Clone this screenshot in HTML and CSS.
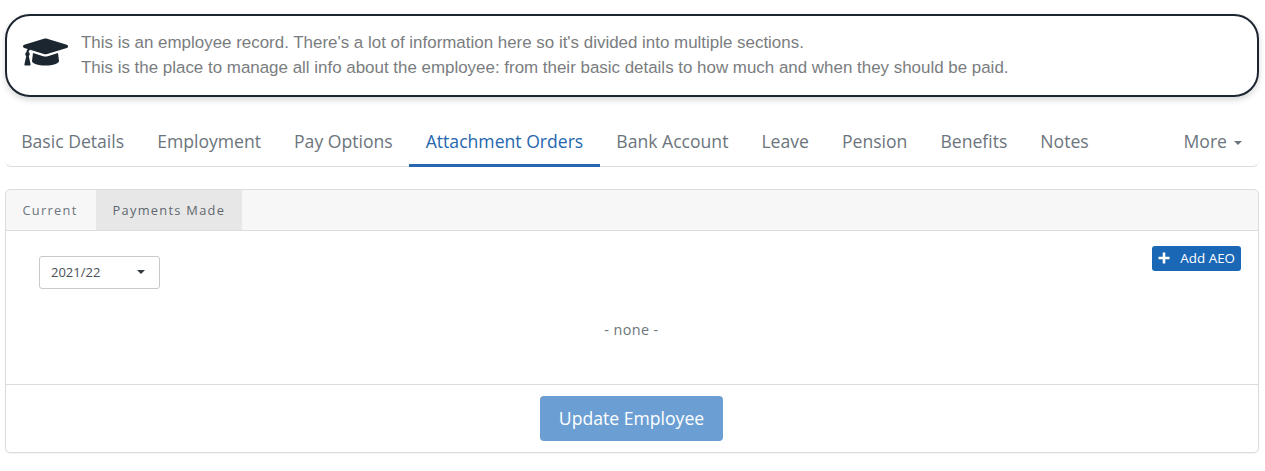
FILE: index.html
```html
<!DOCTYPE html>
<html lang="en">
<head>
<meta charset="utf-8">
<title>Employee record</title>
<link rel="stylesheet" href="styles.css">
</head>
<body>
<div class="banner">
  <svg class="cap" viewBox="0 0 640 512" aria-hidden="true"><path d="M622.34 153.2L343.4 67.5c-15.2-4.67-31.6-4.67-46.79 0L17.66 153.2c-23.54 7.23-23.54 38.36 0 45.59l48.63 14.94c-10.67 13.19-17.23 29.28-17.88 46.9C38.78 266.15 32 276.11 32 288c0 10.78 5.68 19.85 13.86 25.65L20.33 428.53C18.11 438.52 25.71 448 35.94 448h56.11c10.24 0 17.84-9.48 15.62-19.47L82.14 313.65C90.32 307.85 96 298.78 96 288c0-11.57-6.47-21.25-15.66-26.87.76-15.02 8.44-28.3 20.69-36.72L296.6 284.5c9.06 2.78 26.44 6.25 46.79 0l278.95-85.7c23.55-7.24 23.55-38.36 0-45.6zM352.79 315.09c-28.53 8.76-52.84 3.92-65.59 0l-145.02-44.55L128 384c0 35.35 85.96 64 192 64s192-28.65 192-64l-14.18-113.47-145.03 44.56z"/></svg>
  <div class="banner-text">
    <p>This is an employee record. There's a lot of information here so it's divided into multiple sections.</p>
    <p>This is the place to manage all info about the employee: from their basic details to how much and when they should be paid.</p>
  </div>
</div>

<nav class="tabs">
  <a class="tab">Basic Details</a>
  <a class="tab">Employment</a>
  <a class="tab">Pay Options</a>
  <a class="tab active">Attachment Orders</a>
  <a class="tab">Bank Account</a>
  <a class="tab">Leave</a>
  <a class="tab">Pension</a>
  <a class="tab">Benefits</a>
  <a class="tab">Notes</a>
  <a class="tab more">More<span class="caret"></span></a>
</nav>

<section class="card">
  <div class="card-tabs">
    <a class="subtab">Current</a>
    <a class="subtab selected">Payments Made</a>
  </div>
  <div class="card-body">
    <div class="toolbar">
      <button class="select" type="button"><span>2021/22</span><span class="select-caret"></span></button>
      <button class="add" type="button">
        <svg class="plus" viewBox="0 0 12 12" aria-hidden="true"><path d="M6 .5v11M.5 6h11"/></svg>
        Add AEO
      </button>
    </div>
    <p class="none">- none -</p>
  </div>
  <div class="card-footer">
    <button class="update" type="button">Update Employee</button>
  </div>
</section>
</body>
</html>
```
FILE: styles.css
```css
* { box-sizing: border-box; }
html, body { margin: 0; padding: 0; background: #fff; }
body {
  padding: 14px 6px 0 5px;
  font-family: "Open Sans", "Liberation Sans", sans-serif;
  color: #6c757d;
  height: 471px;
  overflow: hidden;
}
p { margin: 0; }

.banner {
  display: flex;
  align-items: center;
  height: 83px;
  padding: 0 16px 0 16px;
  border: 2px solid #1c2630;
  border-radius: 25px;
  box-shadow: 0 3px 6px rgba(0, 0, 0, .16);
  background: #fff;
}
.cap { width: 45px; height: 36px; margin-bottom: 8px; fill: #1c2630; flex: none; }
.banner-text {
  margin-left: 13px;
  padding-bottom: 2px;
  font-family: "Liberation Sans", Arial, sans-serif;
  font-size: 16.93px;
  line-height: 25px;
  color: #7a7d80;
}

.tabs {
  display: flex;
  height: 41px;
  margin-top: 29px;
  border-bottom: 1px solid #dcdcdc;
  border-radius: 0 0 6px 6px;
}
.tab {
  height: 41px;
  padding: 0 16.5px;
  font-size: 17.6px;
  line-height: 31px;
  color: #6c757d;
  white-space: nowrap;
}
.tab:first-child { padding-left: 16.2px; }
.tab.active {
  color: #2566ae;
  border-bottom: 3px solid #2566ae;
}
.tab.more { margin-left: auto; padding-right: 17px; }
.caret {
  display: inline-block;
  margin-left: 7px;
  vertical-align: 3px;
  border-top: 4px solid #6c757d;
  border-left: 4px solid transparent;
  border-right: 4px solid transparent;
}

.card {
  height: 264px;
  margin-top: 22px;
  border: 1px solid #dcdcdc;
  border-radius: 5px;
  box-shadow: 0 1px 1px rgba(0, 0, 0, .05);
  display: flex;
  flex-direction: column;
}
.card-tabs {
  display: flex;
  gap: 2px;
  height: 41px;
  background: #f7f7f7;
  border-bottom: 1px solid #dcdcdc;
  border-radius: 5px 5px 0 0;
  flex: none;
}
.subtab {
  padding: 0 16.5px;
  font-size: 12.8px;
  line-height: 41px;
  letter-spacing: 1.3px;
  color: #6c757d;
}
.subtab.selected {
  background: #e7e7e7;
  color: #5f6770;
}

.card-body { flex: 1; padding: 15px 17px 0 33px; }
.toolbar { display: flex; justify-content: space-between; align-items: flex-start; }
.select {
  display: flex;
  align-items: center;
  justify-content: space-between;
  width: 121px;
  height: 33px;
  margin-top: 10px;
  padding: 0 14px 1px 11px;
  background: #fff;
  border: 1px solid #c9c9c9;
  border-radius: 3px;
  font: 13px "Open Sans", sans-serif;
  color: #495057;
}
.select-caret {
  border-top: 4px solid #343a40;
  border-left: 4px solid transparent;
  border-right: 4px solid transparent;
}
.add {
  display: flex;
  align-items: center;
  height: 25px;
  padding: 0 6px 1px;
  background: #1a67b5;
  color: #fff;
  border: 0;
  border-radius: 3px;
  font: 400 13.4px "Open Sans", sans-serif;
}
.plus {
  width: 12px;
  height: 12px;
  margin-right: 10px;
  fill: none;
  stroke: #fff;
  stroke-width: 2.6;
}
.none {
  margin-top: 31px;
  text-align: center;
  font-size: 14.4px;
  line-height: 20px;
  padding-right: 17px;
  letter-spacing: .4px;
  color: #6c757d;
}

.card-footer {
  display: flex;
  justify-content: center;
  height: 68px;
  padding: 11px 1px 0 0;
  border-top: 1px solid #dcdcdc;
  flex: none;
}
.update {
  width: 183px;
  height: 45px;
  padding-bottom: 2px;
  background: #6b9fd4;
  color: #fff;
  border: 0;
  border-radius: 4px;
  font: 400 17.6px "Open Sans", sans-serif;
}
```
